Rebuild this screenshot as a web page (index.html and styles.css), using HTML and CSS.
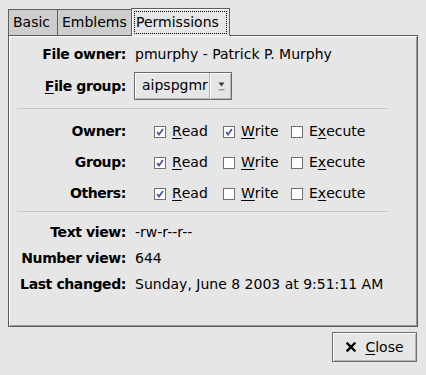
FILE: index.html
```html
<!DOCTYPE html>
<html lang="en">
<head>
    <meta charset="UTF-8">
    <title>Permissions</title>
    <link rel="stylesheet" href="styles.css">
</head>
<body>
    <div class="dialog">
        <div class="tabs">
            <div class="tab tab-basic">Basic</div>
            <div class="tab tab-emblems">Emblems</div>
            <div class="tab tab-active"><span class="focus">Permissions</span></div>
        </div>

        <div class="page">
            <div class="grid info-top">
                <div class="label">File owner:</div>
                <div class="value">pmurphy - Patrick P. Murphy</div>

                <div class="label"><u>F</u>ile group:</div>
                <div class="value">
                    <div class="combo">
                        <span class="combo-text">aipspgmr</span>
                        <span class="combo-arrow">
                            <svg width="7" height="9" viewBox="0 0 7 9">
                                <path d="M0.5 0.5 H6.5 L3.5 4.5 Z" fill="#3c3c3c"/>
                                <rect x="0.5" y="7" width="6" height="1.5" fill="#9a9a9a"/>
                            </svg>
                        </span>
                    </div>
                </div>
            </div>

            <div class="sep"></div>

            <div class="grid perms">
                <div class="label">Owner:</div>
                <div class="checks">
                    <span class="check"><span class="box on"></span><u>R</u>ead</span>
                    <span class="check"><span class="box on"></span><u>W</u>rite</span>
                    <span class="check"><span class="box"></span>E<u>x</u>ecute</span>
                </div>

                <div class="label">Group:</div>
                <div class="checks">
                    <span class="check"><span class="box on"></span><u>R</u>ead</span>
                    <span class="check"><span class="box"></span><u>W</u>rite</span>
                    <span class="check"><span class="box"></span>E<u>x</u>ecute</span>
                </div>

                <div class="label">Others:</div>
                <div class="checks">
                    <span class="check"><span class="box on"></span><u>R</u>ead</span>
                    <span class="check"><span class="box"></span><u>W</u>rite</span>
                    <span class="check"><span class="box"></span>E<u>x</u>ecute</span>
                </div>
            </div>

            <div class="sep sep-low"></div>

            <div class="grid info-bottom">
                <div class="label">Text view:</div>
                <div class="value">-rw-r--r--</div>

                <div class="label">Number view:</div>
                <div class="value">644</div>

                <div class="label">Last changed:</div>
                <div class="value">Sunday, June 8 2003 at 9:51:11 AM</div>
            </div>
        </div>

        <div class="actions">
            <button class="button">
                <svg class="close-icon" width="10" height="10" viewBox="0 0 10 10">
                    <path d="M1.5 1.5 L8.5 8.5 M8.5 1.5 L1.5 8.5" stroke="#000" stroke-width="2.4" stroke-linecap="square"/>
                </svg>
                <span><u>C</u>lose</span>
            </button>
        </div>
    </div>
</body>
</html>
```

FILE: styles.css
```css
body {
    margin: 0;
    background-color: #e6e6e6;
    color: #000;
    font-family: "DejaVu Sans", "Liberation Sans", sans-serif;
    font-size: 14px;
}

u {
    text-decoration: underline;
    text-underline-offset: 2px;
}

.dialog {
    padding: 8px;
}

/* Pestañas */
.tabs {
    display: flex;
    align-items: flex-end;
    height: 27px;
}

.tab {
    box-sizing: border-box;
    height: 26px;
    padding: 0 4px;
    line-height: 25px;
    background-color: #cdcdcd;
    border: 1px solid #5f5f5f;
    border-bottom: none;
    margin-left: -1px;
}

.tab-basic {
    margin-left: 0;
    width: 50px;
}

.tab-emblems {
    width: 75px;
}

.tab-active {
    position: relative;
    z-index: 1;
    width: 99px;
    height: 28px;
    margin-bottom: -1px;
    padding: 2px 2px 0 2px;
    background-color: #e6e6e6;
    box-shadow: inset 1px 1px 0 #fff;
}

.focus {
    display: block;
    height: 23px;
    line-height: 21px;
    padding-left: 1px;
    border: 1px dotted #000;
    box-sizing: border-box;
}

/* Página */
.page {
    box-sizing: border-box;
    height: 292px;
    padding: 10px 8px 0 8px;
    border: 1px solid #5a5a5a;
    box-shadow: inset 1px 1px 0 #fff, inset -1px -1px 0 #9a9a9a;
}

.grid {
    display: grid;
    grid-template-columns: 109px auto;
    column-gap: 9px;
    align-items: center;
}

.label {
    font-weight: bold;
    text-align: right;
    line-height: 17px;
    white-space: nowrap;
    letter-spacing: -0.4px;
}

.value {
    line-height: 17px;
    white-space: nowrap;
}

.info-top {
    grid-template-rows: 17px 28px;
    row-gap: 9px;
}

.info-bottom {
    grid-template-rows: 17px 17px 17px;
    row-gap: 9px;
}

.perms {
    grid-template-rows: 17px 17px 17px;
    row-gap: 14px;
}

.sep {
    width: 370px;
    height: 1px;
    background-color: #c6c6c6;
    margin: 8px 0 14px 0;
}

.sep-low {
    margin: 9px 0 12px 0;
}

/* Combo */
.combo {
    box-sizing: border-box;
    display: flex;
    width: 98px;
    height: 28px;
    margin-left: -1px;
    border: 1px solid #6a6a6a;
    box-shadow: inset 1px 1px 0 #fff, inset -1px -1px 0 #b4b4b4;
}

.combo-text {
    flex: 1;
    padding-left: 7px;
    line-height: 25px;
    border-right: 1px solid #b4b4b4;
}

.combo-arrow {
    width: 20px;
    display: flex;
    align-items: center;
    justify-content: center;
    border-left: 1px solid #fff;
}

/* Casillas */
.checks {
    display: grid;
    grid-template-columns: 69px 68px auto;
    padding-left: 19px;
    line-height: 17px;
}

.check {
    display: flex;
    align-items: center;
}

.box {
    box-sizing: border-box;
    width: 12px;
    height: 12px;
    margin-right: 6px;
    border: 1px solid #707070;
    background-color: #fff;
}

.box.on {
    background: #fff url("data:image/svg+xml,%3Csvg xmlns='http://www.w3.org/2000/svg' width='10' height='10' viewBox='0 0 10 10'%3E%3Cpath d='M2 5 L4 7.5 L8 2' fill='none' stroke='%234356a6' stroke-width='1.8'/%3E%3C/svg%3E") no-repeat center;
}

/* Botón */
.actions {
    display: flex;
    justify-content: flex-end;
    margin-top: 5px;
}

.button {
    box-sizing: border-box;
    width: 85px;
    height: 30px;
    margin-right: 1px;
    display: flex;
    align-items: center;
    justify-content: center;
    gap: 9px;
    padding: 0 0 0 1px;
    font-family: inherit;
    font-size: 14px;
    color: #000;
    background-color: #e6e6e6;
    border: 1px solid #6e6e6e;
    box-shadow: inset 1px 1px 0 #fff, inset -1px -1px 0 #b4b4b4;
}
```
